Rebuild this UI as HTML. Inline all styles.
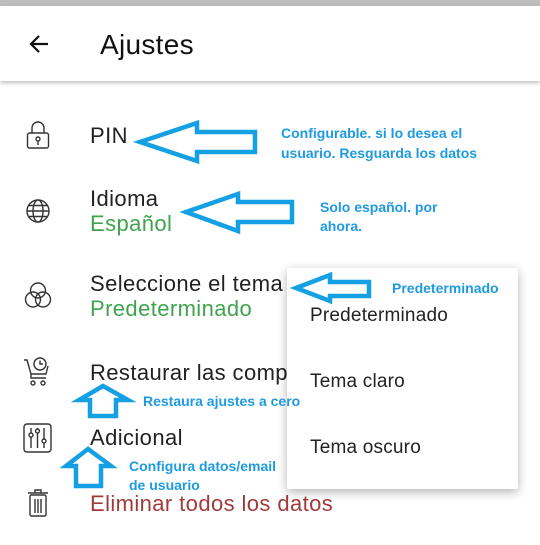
<!DOCTYPE html><html><head><meta charset="utf-8"><style>
body{margin:0;width:540px;height:545px;background:#fff;position:relative;overflow:hidden;font-family:"Liberation Sans",sans-serif}
.t{position:absolute;left:90px;font-size:22px;letter-spacing:0.4px;color:#222;white-space:nowrap;line-height:1}
.g{color:#3fa34d}.r{color:#a33a3a}
.m{position:absolute;left:287px;top:268px;width:231px;height:221px;background:#fff;box-shadow:0 3px 10px rgba(0,0,0,.3);border-radius:2px}
.mi{position:absolute;left:23px;font-size:19px;letter-spacing:0.2px;color:#222;line-height:1}
.a{position:absolute;font-size:14px;font-weight:bold;color:#1e9be0;white-space:nowrap;line-height:1}
svg{position:absolute}
</style></head><body>
<div style="position:absolute;left:0;top:0;width:540px;height:6px;background:#bdbdbd"></div>
<div style="position:absolute;left:0;top:6px;width:540px;height:75px;background:#fff;box-shadow:0 2px 4px rgba(0,0,0,.25)"></div>
<svg style="left:27px;top:32px" width="24" height="24" viewBox="0 0 24 24"><path d="M21 12H4M12 4l-8 8 8 8" fill="none" stroke="#111" stroke-width="2.2"/></svg>
<div style="position:absolute;left:100px;top:29px;font-size:28px;letter-spacing:0.3px;color:#111">Ajustes</div>

<svg style="left:25px;top:120px" width="26" height="30" viewBox="0 0 26 30" fill="none" stroke="#333" stroke-width="1.4"><path d="M7 13V8a6 6 0 0 1 12 0v5"/><rect x="2.5" y="13" width="21" height="15" rx="2"/><circle cx="13" cy="19" r="2"/><path d="M13 21v4"/></svg>
<div class="t" style="top:125px">PIN</div>

<svg style="left:25px;top:198px" width="26" height="26" viewBox="0 0 26 26" fill="none" stroke="#333" stroke-width="1.4"><circle cx="13" cy="13" r="11"/><ellipse cx="13" cy="13" rx="5" ry="11"/><path d="M2 13h22M4 7.5h18M4 18.5h18"/></svg>
<div class="t" style="top:188px">Idioma</div>
<div class="t g" style="top:213px">Español</div>

<svg style="left:22px;top:280px" width="32" height="32" viewBox="0 0 32 32" fill="none" stroke="#333" stroke-width="1.4"><circle cx="16" cy="10.5" r="7.5"/><circle cx="11" cy="19.5" r="7.5"/><circle cx="21" cy="19.5" r="7.5"/></svg>
<div class="t" style="top:273px">Seleccione el tema</div>
<div class="t g" style="top:298px">Predeterminado</div>

<svg style="left:22px;top:355px" width="30" height="32" viewBox="0 0 30 32" fill="none" stroke="#333" stroke-width="1.4"><path d="M2 5h3l4 14h15l2-8"/><path d="M9 19v4h15"/><circle cx="11" cy="28" r="2"/><circle cx="21" cy="28" r="2"/><circle cx="18" cy="9" r="6"/><path d="M18 5.5V9h3"/></svg>
<div class="t" style="top:362px">Restaurar las comp</div>

<svg style="left:23px;top:423px" width="29" height="30" viewBox="0 0 29 30" fill="none" stroke="#333" stroke-width="1.4"><rect x="1" y="1" width="27" height="28" rx="3"/><path d="M8 5v20M14.5 5v20M21 5v20"/><circle cx="8" cy="12" r="2" fill="#fff"/><circle cx="14.5" cy="8" r="2" fill="#fff"/><circle cx="21" cy="18" r="2" fill="#fff"/></svg>
<div class="t" style="top:427px">Adicional</div>

<svg style="left:27px;top:488px" width="22" height="30" viewBox="0 0 22 30" fill="none" stroke="#333" stroke-width="1.4"><path d="M1 5h20M8 5V2h6v3"/><rect x="3" y="7" width="16" height="21" rx="1.5"/><path d="M8 11v14M11 11v14M14 11v14"/></svg>
<div class="t r" style="top:493px">Eliminar todos los datos</div>

<div class="m">
<div class="mi" style="top:38px">Predeterminado</div>
<div class="mi" style="top:104px">Tema claro</div>
<div class="mi" style="top:170px">Tema oscuro</div>
</div>

<svg style="left:0;top:0" width="540" height="545" fill="none" stroke="#16a0e4" stroke-width="4.5" stroke-linejoin="miter">
<polygon points="140,142 197,123 197,132 255,132 255,152 197,152 197,161"/>
<polygon points="186,212 238,194 238,202 292,202 292,222 238,222 238,231"/>
<polygon points="296,288 330,275 330,282 369,282 369,296 330,296 330,301"/>
<polygon points="103,386 79,400 90,400 90,416 116,416 116,400 128,400"/>
<polygon points="88,449 66,466 76,466 76,486 101,486 101,466 111,466"/>
</svg>

<div class="a" style="left:281px;top:126px">Configurable. si lo desea el</div>
<div class="a" style="left:281px;top:146px">usuario. Resguarda los datos</div>
<div class="a" style="left:320px;top:200px">Solo español. por</div>
<div class="a" style="left:320px;top:219px">ahora.</div>
<div class="a" style="left:392px;top:281px">Predeterminado</div>
<div class="a" style="left:143px;top:394px">Restaura ajustes a cero</div>
<div class="a" style="left:129px;top:459px">Configura datos/email</div>
<div class="a" style="left:129px;top:478px">de usuario</div>
</body></html>
